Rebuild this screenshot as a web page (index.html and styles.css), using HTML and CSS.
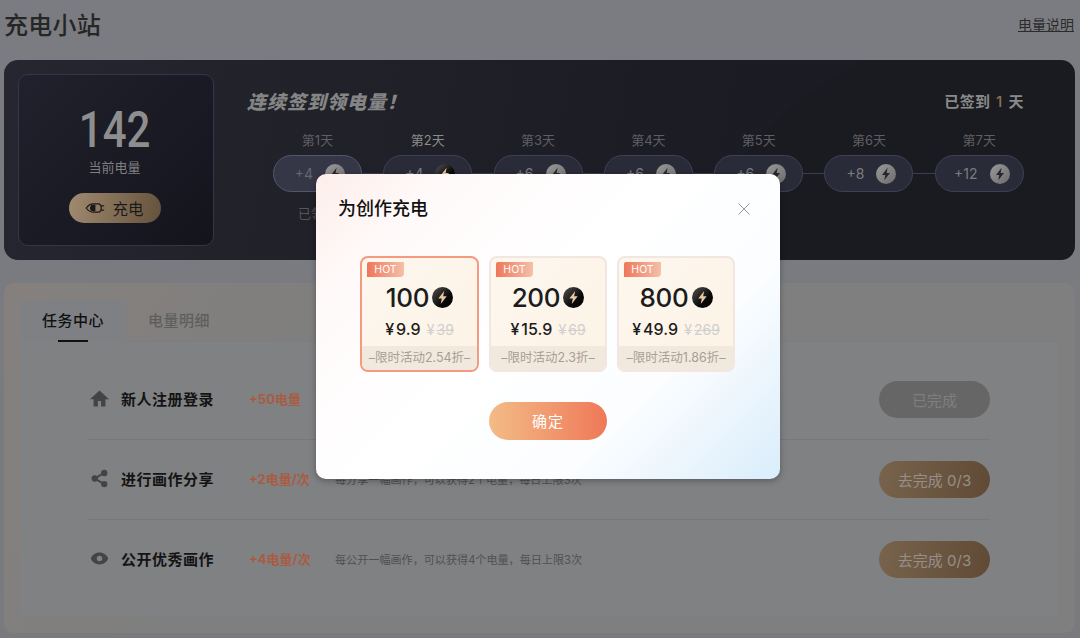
FILE: index.html
```html
<!DOCTYPE html>
<html lang="zh-CN">
<head>
  <meta charset="UTF-8">
  <meta name="viewport" content="width=device-width, initial-scale=1">
  <title>充电小站</title>
  <link rel="stylesheet" href="styles.css">
</head>
<body>
  <svg class="defs" width="0" height="0" aria-hidden="true">
    <defs>
      <linearGradient id="coinDark" x1="0" y1="0" x2="1" y2="1">
        <stop offset="0" stop-color="#55534f"/>
        <stop offset="0.6" stop-color="#0b0b0b"/>
        <stop offset="1" stop-color="#000"/>
      </linearGradient>
      <linearGradient id="coinGray" x1="0" y1="0" x2="1" y2="1">
        <stop offset="0" stop-color="#9a9a9a"/>
        <stop offset="1" stop-color="#6c6c6c"/>
      </linearGradient>
      <symbol id="coin" viewBox="0 0 20 20">
        <circle cx="10" cy="10" r="10" fill="url(#coinDark)"/>
        <path d="M11.6 3.8 6 11h3.3l-1 5.2L14 8.9h-3.4z" fill="#e9c9a2"/>
      </symbol>
      <symbol id="coinOff" viewBox="0 0 20 20">
        <circle cx="10" cy="10" r="10" fill="url(#coinGray)"/>
        <path d="M11.6 3.8 6 11h3.3l-1 5.2L14 8.9h-3.4z" fill="#26262e"/>
      </symbol>
    </defs>
  </svg>

  <div class="page">
    <header class="top">
      <h1>充电小站</h1>
      <a class="help">电量说明</a>
    </header>

    <!-- Sign in banner -->
    <section class="banner">
      <div class="power">
        <div class="power-num">142</div>
        <div class="power-label">当前电量</div>
        <button class="charge-btn" type="button">
          <svg width="20" height="12" viewBox="0 0 24 14"><path d="M1.500 7C4 3.500 7 2 10 2h6c2 0 3.500 2 3.500 5s-1.500 5-3.500 5h-6C7 12 4 10.500 1.500 7z" fill="none" stroke="#1c1a18" stroke-width="1.500"/><path d="M8 3h4.500v8H8C6.500 9.500 6 8.500 6 7s.5-2.500 2-4z" fill="#1c1a18"/><path d="M19 4.500h4M19 9.500h4" stroke="#1c1a18" stroke-width="1.500"/></svg>
          <span>充电</span>
        </button>
      </div>
      <div class="signin">
        <div class="signin-head">
          <h2>连续签到领电量！</h2>
          <div class="signin-count">已签到 <b>1</b> 天</div>
        </div>
        <div class="days">
          <div class="day done">
            <div class="day-name">第1天</div>
            <div class="pill"><span>+4</span><svg class="coin"><use href="#coinOff"/></svg></div>
            <div class="day-note">已领取</div>
          </div>
          <div class="day today">
            <div class="day-name">第2天</div>
            <div class="pill"><span>+4</span><svg class="coin"><use href="#coin"/></svg></div>
          </div>
          <div class="day">
            <div class="day-name">第3天</div>
            <div class="pill"><span>+6</span><svg class="coin"><use href="#coinOff"/></svg></div>
          </div>
          <div class="day">
            <div class="day-name">第4天</div>
            <div class="pill"><span>+6</span><svg class="coin"><use href="#coinOff"/></svg></div>
          </div>
          <div class="day">
            <div class="day-name">第5天</div>
            <div class="pill"><span>+6</span><svg class="coin"><use href="#coinOff"/></svg></div>
          </div>
          <div class="day">
            <div class="day-name">第6天</div>
            <div class="pill"><span>+8</span><svg class="coin"><use href="#coinOff"/></svg></div>
          </div>
          <div class="day">
            <div class="day-name">第7天</div>
            <div class="pill"><span>+12</span><svg class="coin"><use href="#coinOff"/></svg></div>
          </div>
        </div>
      </div>
    </section>

    <!-- Tasks -->
    <section class="tasks">
      <div class="tabs">
        <div class="tab active">任务中心</div>
        <div class="tab">电量明细</div>
      </div>
      <div class="task-list">
        <div class="task">
          <svg class="task-icon" viewBox="0 0 24 24"><path d="M10 22v-7h4v7h5.500v-9H24L12 2 0 13h4.500v9z"/></svg>
          <div class="task-name">新人注册登录</div>
          <div class="task-reward">+50电量</div>
          <div class="task-desc">完成注册登录，可以获得50个电量</div>
          <button class="task-btn finished" type="button">已完成</button>
        </div>
        <div class="task">
          <svg class="task-icon" viewBox="0 0 24 24"><path d="M18 5 6 12l12 7" fill="none" stroke="#444" stroke-width="2.500"/><circle cx="18" cy="5" r="4"/><circle cx="6" cy="12" r="4"/><circle cx="18" cy="19" r="4"/></svg>
          <div class="task-name">进行画作分享</div>
          <div class="task-reward">+2电量/次</div>
          <div class="task-desc">每分享一幅画作，可以获得2个电量，每日上限3次</div>
          <button class="task-btn" type="button">去完成 0/3</button>
        </div>
        <div class="task">
          <svg class="task-icon" viewBox="0 0 24 24"><path fill-rule="evenodd" d="M12 4.500C7 4.500 2.700 7.600 1 12c1.700 4.400 6 7.500 11 7.500s9.300-3.100 11-7.500c-1.700-4.400-6-7.500-11-7.500zM12 8.500a3.500 3.500 0 1 0 0 7 3.500 3.500 0 0 0 0-7z"/></svg>
          <div class="task-name">公开优秀画作</div>
          <div class="task-reward">+4电量/次</div>
          <div class="task-desc">每公开一幅画作，可以获得4个电量，每日上限3次</div>
          <button class="task-btn" type="button">去完成 0/3</button>
        </div>
      </div>
    </section>
  </div>

  <!-- Charge dialog -->
  <div class="modal">
    <h3>为创作充电</h3>
    <svg class="modal-close" width="12" height="12" viewBox="0 0 12 12"><path d="M.5.5l11 11M11.500.5l-11 11" stroke="#9a9a9a" stroke-width="1" fill="none"/></svg>
    <div class="plans">
      <div class="plan selected">
        <span class="hot">HOT</span>
        <div class="plan-amount">100<svg class="plan-coin"><use href="#coin"/></svg></div>
        <div class="plan-price"><i>¥</i>9.9 <s><i>¥</i>39</s></div>
        <div class="plan-note">–限时活动2.54折–</div>
      </div>
      <div class="plan">
        <span class="hot">HOT</span>
        <div class="plan-amount">200<svg class="plan-coin"><use href="#coin"/></svg></div>
        <div class="plan-price"><i>¥</i>15.9 <s><i>¥</i>69</s></div>
        <div class="plan-note">–限时活动2.3折–</div>
      </div>
      <div class="plan">
        <span class="hot">HOT</span>
        <div class="plan-amount">800<svg class="plan-coin"><use href="#coin"/></svg></div>
        <div class="plan-price"><i>¥</i>49.9 <s><i>¥</i>269</s></div>
        <div class="plan-note">–限时活动1.86折–</div>
      </div>
    </div>
    <button class="confirm" type="button">确定</button>
  </div>
</body>
</html>
```

FILE: styles.css
```css
* { box-sizing: border-box; }

body {
  margin: 0;
  height: 638px;
  overflow: hidden;
  font-family: Inter, 'Noto Sans CJK SC', sans-serif;
  background: linear-gradient(180deg, #7b7c81, #787a7e);
  color: #222;
}

button {
  border: none;
  font-family: inherit;
  padding: 0;
}

.defs { position: absolute; }

.page { padding: 0 5px 0 4px; }

.top {
  display: flex;
  justify-content: space-between;
  align-items: center;
  height: 47px;
  margin-bottom: 13px;
}

.top h1 {
  margin: 0;
  font-size: 24px;
  font-weight: 500;
  letter-spacing: 0.25px;
  color: #262626;
}

.help {
  margin-right: 1px;
  font-size: 14px;
  color: #2b2b2b;
  text-decoration: underline;
}

/* Banner */
.banner {
  display: flex;
  height: 200px;
  padding: 14px;
  border-radius: 14px;
  background:
    radial-gradient(circle at 1000px 300px, #1a1a21 0, #1a1a21 330px, rgba(26, 26, 33, 0) 331px),
    linear-gradient(100deg, #25262f, #1c1c24 60%, #1a1a21);
}

.power {
  flex: none;
  display: flex;
  flex-direction: column;
  align-items: center;
  width: 196px;
  height: 172px;
  padding: 30px 3px 0 0;
  border: 1px solid #33354a;
  border-radius: 10px;
  background: linear-gradient(135deg, #20212c, #14141d);
}

.power-num {
  height: 50px;
  font-family: Roboto, sans-serif;
  font-size: 50px;
  font-weight: 500;
  line-height: 50px;
  color: #8e8e8e;
  transform: scaleX(0.84);
}

.power-label {
  margin-top: 3px;
  font-size: 13px;
  line-height: 18px;
  color: #7f7f7f;
}

.charge-btn {
  display: flex;
  align-items: center;
  justify-content: center;
  gap: 7px;
  width: 92px;
  height: 30px;
  margin-top: 17px;
  border-radius: 15px;
  font-size: 15.500px;
  color: #1c1a18;
  background: linear-gradient(100deg, #a08a70, #65523c);
}

.signin {
  flex: 1;
  padding: 14px 52px 0 33px;
}

.signin-head {
  display: flex;
  justify-content: space-between;
  align-items: center;
  height: 24px;
}

.signin-head h2 {
  margin: 0;
  font-size: 19px;
  font-weight: 900;
  font-style: italic;
  letter-spacing: 1px;
  color: #858585;
}

.signin-count {
  font-size: 15px;
  font-weight: 700;
  letter-spacing: 0.3px;
  color: #8a8a8a;
}

.signin-count b {
  margin: 0 2px;
  font-weight: 500;
  color: #8f7350;
}

.days {
  display: flex;
  gap: 21.300px;
  margin: 19px 0 0 26px;
}

.day {
  position: relative;
  flex: none;
  width: 89px;
  text-align: center;
}

.day:not(:last-child)::after {
  content: "";
  position: absolute;
  top: 42px;
  left: 89px;
  width: 22px;
  height: 1px;
  background: #3b3c4d;
}

.day-name {
  height: 18px;
  margin-bottom: 6px;
  font-size: 13px;
  line-height: 18px;
  color: #5f5f63;
}

.today .day-name { color: #8c8c8c; }

.pill {
  display: flex;
  align-items: center;
  justify-content: center;
  gap: 12px;
  height: 37px;
  padding-left: 5px;
  border: 1px solid #3f4056;
  border-radius: 19px;
  font-size: 14px;
  color: #7b7b7f;
  background: #2a2b38;
}

.done .pill {
  border-color: #54566e;
  background: #363746;
  color: #66666c;
}

.coin {
  width: 20px;
  height: 20px;
}

.day-note {
  margin-top: 12px;
  font-size: 13px;
  line-height: 18px;
  color: #55555a;
}

/* Tasks */
.tasks {
  height: 350px;
  margin-top: 23px;
  padding: 17px 17px 17px 16px;
  border-radius: 10px;
  background: linear-gradient(120deg, #85807d, #7f7f7f 30%, #7f7f7f);
}

.tabs {
  display: flex;
  height: 42px;
  border-bottom: 1px solid #7b7e87;
}

.tab {
  position: relative;
  width: 106px;
  height: 42px;
  border-radius: 6px 6px 0 0;
  font-size: 15px;
  font-weight: 500;
  letter-spacing: 0.5px;
  line-height: 42px;
  text-align: center;
  color: #5e5e5e;
}

.tab.active {
  color: #111;
  background: #7f8083;
}

.tab.active::after {
  content: "";
  position: absolute;
  left: 38px;
  bottom: 0;
  width: 30px;
  height: 2px;
  background: #111;
}

.task-list {
  height: 274px;
  padding: 18px 68px 0;
  border-radius: 0 0 6px 6px;
  background: #808183;
}

.task {
  display: flex;
  align-items: center;
  height: 80px;
  padding-left: 2px;
  border-bottom: 1px solid #777879;
}

.task:last-child { border-bottom-color: transparent; }

.task-icon {
  flex: none;
  width: 19px;
  height: 19px;
  margin: 0 12px 2px 0;
  fill: #444;
}

.task-name {
  flex: none;
  width: 128px;
  margin-bottom: 2px;
  font-size: 15px;
  font-weight: 700;
  letter-spacing: 0.5px;
  color: #141414;
}

.task-reward {
  flex: none;
  width: 86px;
  margin-bottom: 2px;
  font-size: 13px;
  font-weight: 700;
  color: #a85c42;
}

.task-desc {
  flex: 1;
  margin-bottom: 2px;
  font-size: 11.100px;
  color: #505050;
}

.task-btn {
  flex: none;
  width: 111px;
  height: 37px;
  border-radius: 19px;
  font-size: 15px;
  color: #949089;
  background: linear-gradient(100deg, #78634d, #604a35);
}

.task-btn.finished {
  color: #7f7f7f;
  background: #666;
}

/* Modal */
.modal {
  position: absolute;
  left: 316px;
  top: 174px;
  width: 464px;
  height: 305px;
  padding: 23px 44px 0 22px;
  border-radius: 10px;
  background: linear-gradient(135deg, #fdeeea 0, #fffafa 18%, #fff 45%, #fbfdff 72%, #d9edfb 100%);
  box-shadow: 0 2px 6px rgba(0, 0, 0, 0.3);
}

.modal h3 {
  margin: 0;
  font-size: 18px;
  font-weight: 500;
  line-height: 24px;
  color: #111;
}

.modal-close {
  position: absolute;
  top: 29px;
  right: 30px;
}

.plans {
  display: flex;
  gap: 10px;
  margin: 35px 0 0 22px;
}

.plan {
  position: relative;
  display: flex;
  flex-direction: column;
  align-items: center;
  width: 119px;
  height: 116px;
  padding-top: 21px;
  border: 2px solid #f3e5df;
  border-radius: 8px;
  overflow: hidden;
  background: linear-gradient(135deg, #fdf7ee, #fdf3e6);
}

.plan + .plan { width: 118px; }

.plan.selected { border: 2px solid #f59a7e; }

.hot {
  position: absolute;
  top: 4px;
  left: 5px;
  width: 37px;
  height: 15px;
  border-radius: 2px 0 4px 0;
  font-size: 10.500px;
  line-height: 15px;
  text-align: center;
  color: #fff;
  background: linear-gradient(90deg, #ee775a, #f5bfa9);
}

.plan-amount {
  display: flex;
  align-items: center;
  gap: 3px;
  height: 36px;
  font-size: 26px;
  font-weight: 500;
  letter-spacing: -0.3px;
  color: #1c1c1c;
}

.plan-coin {
  width: 21px;
  height: 21px;
}

.plan-price {
  height: 24px;
  margin-top: 2px;
  font-size: 16px;
  font-weight: 500;
  line-height: 24px;
  color: #1c1c1c;
}

.plan-price i {
  margin-right: 2px;
  font-style: normal;
}

.plan-price s {
  margin-left: 2px;
  font-size: 14px;
  font-weight: 400;
  color: #cfcfcf;
}

.plan-note {
  width: 100%;
  height: 24px;
  margin-top: auto;
  font-size: 12.500px;
  line-height: 24px;
  text-align: center;
  white-space: nowrap;
  color: #a89e94;
  background: #f2e9de;
}

.confirm {
  display: block;
  width: 118px;
  height: 38px;
  margin: 30px 0 0 151px;
  padding-bottom: 2px;
  border-radius: 19px;
  font-size: 15px;
  letter-spacing: 1px;
  color: #fff;
  background: linear-gradient(90deg, #f3bc87, #ef7858);
}
```
